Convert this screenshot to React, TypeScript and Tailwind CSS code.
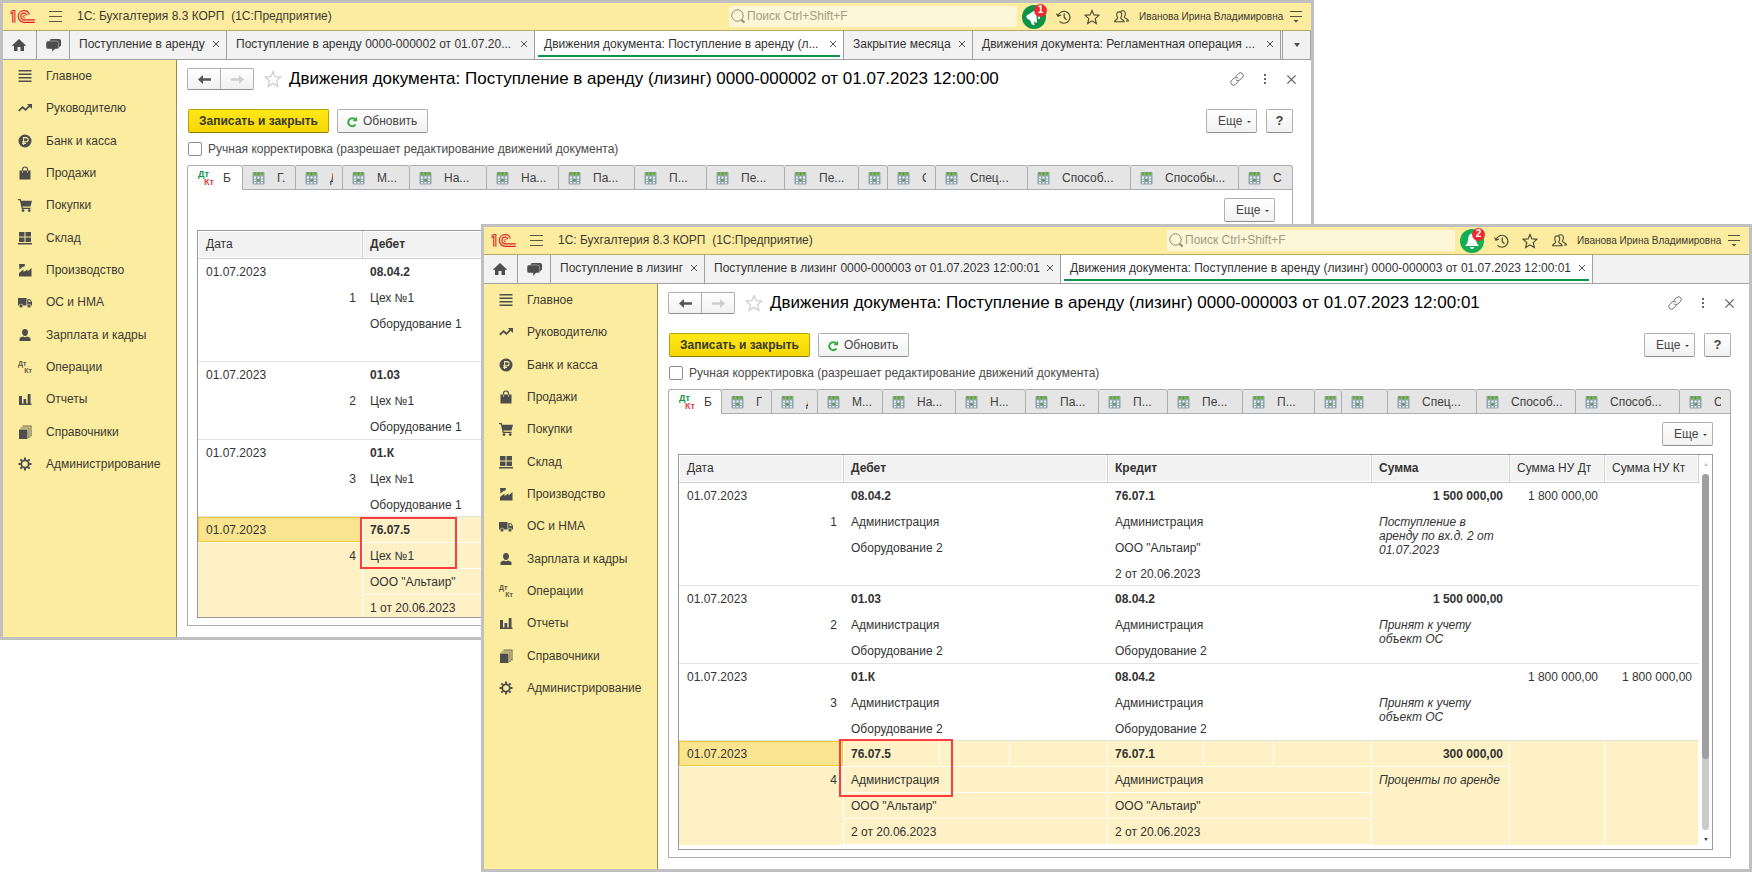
import { useId, type ReactNode } from "react";

type IconProps = { className?: string };

/* ---------- Icons ---------- */

function Logo() {
  return (
    <svg viewBox="0 0 76 40" className="h-[13px] w-[25px] shrink-0" fill="none" stroke="#dc1f26" aria-hidden="true">
      <path d="M1 12 L8 6 M8 6 V39" strokeWidth="3.5" />
      <path d="M1 5 L8 1.500 H14.500 V39" strokeWidth="3.200" />
      <path d="M59 14 C57 5 50 2 43 2 C32 2 25 10 25 19.500 C25 31 34 38 44 38 H76" strokeWidth="3.500" />
      <path d="M51.500 16 C50 11.500 47 9.500 43 9.500 C37 9.500 33 14 33 19.500 C33 26 38 30.500 44 30.500 H76" strokeWidth="3.500" />
      <path d="M46 18 C44 16 40 17 40 20 C40 23 43 24.500 46 24" strokeWidth="3" />
    </svg>
  );
}

function Hamburger() {
  return (
    <svg viewBox="0 0 13 11" className="h-[11px] w-[13px]" stroke="#5f5a3e" aria-hidden="true">
      <path d="M0 .5H13M0 5.500H13M0 10.500H13" />
    </svg>
  );
}

function HomeIcon() {
  return (
    <svg viewBox="0 0 14 12" className="h-3 w-3.5" fill="#4d4d4d" aria-hidden="true">
      <path d="M7 0 0 6.500 1 7.300 2 6.500V12H5.500V8H8.500V12H12V6.500L13 7.300 14 6.500Z" />
    </svg>
  );
}

function ChatIcon() {
  return (
    <svg viewBox="0 0 15 13" className="h-[13px] w-[15px]" aria-hidden="true">
      <rect x="3.500" y="0" width="11.500" height="7.500" rx="2" fill="#4d4d4d" />
      <path d="M10 6H15L12 10Z" fill="#4d4d4d" />
      <path d="M2 2H10.500Q12.500 2 12.500 4V8Q12.500 10 10.500 10H9L6 13V10H2Q0 10 0 8V4Q0 2 2 2Z" fill="#4d4d4d" stroke="#d8d8d8" strokeWidth=".5" />
    </svg>
  );
}

function CloseIcon({ className }: IconProps) {
  return (
    <svg viewBox="0 0 8 8" className={className} stroke="currentColor" fill="none" aria-hidden="true">
      <path d="M1 1 7 7M7 1 1 7" />
    </svg>
  );
}

function SearchIcon() {
  return (
    <svg viewBox="0 0 15 15" className="h-[15px] w-[15px] shrink-0" fill="none" stroke="#8d8767" aria-hidden="true">
      <circle cx="6.500" cy="6.500" r="5.700" />
      <path d="M10.500 11 13.500 13.500" strokeWidth="2" />
    </svg>
  );
}

function HistoryIcon() {
  return (
    <svg viewBox="0 0 15 14" className="h-3.5 w-[15px]" fill="none" stroke="#4a4733" strokeWidth="1.200" aria-hidden="true">
      <path d="M2.200 5.500A6 6 0 1 1 3.500 11.300M.5 3.500 2 6.300 5 5M8.200 3.500V7.500L10.500 9.700" />
    </svg>
  );
}

function StarIcon({ className }: IconProps) {
  return (
    <svg viewBox="0 0 17 17" className={className} fill="none" stroke="currentColor" strokeWidth="1.200" aria-hidden="true">
      <path d="M8.500 1.500 10.600 6.300 15.800 6.700 11.900 10.200 13.100 15.400 8.500 12.600 3.900 15.400 5.100 10.200 1.200 6.700 6.400 6.300Z" />
    </svg>
  );
}

function UsersIcon() {
  return (
    <svg viewBox="0 0 15 13" className="h-[13px] w-[15px]" fill="none" stroke="#4a4733" strokeWidth="1.100" aria-hidden="true">
      <path d="M.6 11.800C.6 9.300 3.700 9.600 3.700 7.900 2.700 6.700 2.600 5.200 2.800 3.700 3.200 1.300 7.300 1.300 7.700 3.700 7.900 5.200 7.700 6.700 6.700 7.900 6.700 9.600 10.200 9.300 10.200 11.800Z" />
      <path d="M6.500 1.700C8 0 11 .6 11.300 3 11.500 4.500 11.200 6 10.300 7 10.300 8.700 14.400 8.500 14.400 11H12" />
    </svg>
  );
}

function ServiceMenuIcon() {
  return (
    <svg viewBox="0 0 12 12" className="h-3 w-3" stroke="#55513a" fill="#55513a" aria-hidden="true">
      <path d="M0 .5H12M0 5.500H12" />
      <path d="M3.500 9H8.500L6 11.500Z" stroke="none" />
    </svg>
  );
}

function MegaphoneIcon() {
  return (
    <svg viewBox="0 0 24 24" className="h-6 w-6" aria-hidden="true">
      <circle cx="12" cy="12" r="12" fill="#0d9347" />
      <path d="M4.200 11 14 4.500 15 18 11.800 16.500 12.800 20 9.800 19.500 8.300 15.500 5 13.500Z" fill="#fff" />
      <path d="M16 9.500Q18.500 10.500 18 13.500L16.300 14.500Z" fill="#fff" />
    </svg>
  );
}

function BellIcon() {
  return (
    <svg viewBox="0 0 24 24" className="h-6 w-6" aria-hidden="true">
      <circle cx="12" cy="12" r="12" fill="#12ad54" />
      <path d="M12 4.500C9 5 8.200 8 8 11 7.700 14 6.500 15.500 5 17H19C17.500 15.500 16.300 14 16 11 15.800 8 15 5 12 4.500ZM9.800 18H14.200Q13.800 20 12 20 10.200 20 9.800 18Z" fill="#fff" />
    </svg>
  );
}

function ArrowIcon({ className }: IconProps) {
  return (
    <svg viewBox="0 0 13 9" className={className} fill="currentColor" aria-hidden="true">
      <path d="M0 4.500 5 0V3.200H13V5.800H5V9Z" />
    </svg>
  );
}

function LinkIcon() {
  return (
    <svg viewBox="0 0 14 14" className="h-3.5 w-3.5" fill="none" stroke="#6b6b6b" strokeLinecap="round" aria-hidden="true">
      <path d="M6 4.200 8.800 1.400A2.700 2.700 0 0 1 12.600 5.200L9.800 8A2.700 2.700 0 0 1 6 8M8 9.800 5.200 12.600A2.700 2.700 0 0 1 1.400 8.800L4.200 6A2.700 2.700 0 0 1 8 6" />
    </svg>
  );
}

function DotsIcon() {
  return (
    <svg viewBox="0 0 4 12" className="h-3 w-1" fill="#666" aria-hidden="true">
      <path d="M1 1H3V3H1ZM1 5H3V7H1ZM1 9H3V11H1Z" />
    </svg>
  );
}

function RefreshIcon() {
  return (
    <svg viewBox="0 0 12 12" className="mt-px h-3 w-3" fill="none" aria-hidden="true">
      <path d="M9 3.300A4 4 0 1 0 9.500 8.500" stroke="#39a845" strokeWidth="2" />
      <path d="M11 .8V5.300H6.500Z" fill="#39a845" />
    </svg>
  );
}

function RegisterIcon() {
  return (
    <svg viewBox="0 0 13 14" className="h-3.5 w-[13px] shrink-0" aria-hidden="true">
      <rect x=".5" y="1" width="12" height="12.500" rx="1" fill="#8fa3b0" />
      <path d="M2 5.500H4V7.500H2ZM5.500 5.500H7.500V7.500H5.500ZM9 5.500H11V7.500H9ZM2 8.500H4V10H2ZM9 8.500H11V10H9ZM2 11H4V12.500H2ZM5.500 11H7.500V12.500H5.500ZM9 11H11V12.500H9Z" fill="#eef3f6" />
      <path d="M5.200 8.200H7.800V10.200H5.200Z" fill="#5fa04a" />
      <path d="M1 1.500H12V4.500H1Z" fill="#86b56c" />
      <path d="M1.500 1.500H4.200L3 4ZM5 1.500H8L6.500 5ZM8.800 1.500H11.500L10 4Z" fill="#559a3d" />
    </svg>
  );
}

function DtKtIcon({ small }: { small?: boolean }) {
  return small ? (
    <span className="block w-3.5 text-left text-[7px] leading-[7px] font-bold text-[#5c5843]" aria-hidden="true">
      <span className="block">Дт</span>
      <span className="block text-right">Кт</span>
    </span>
  ) : (
    <span className="block w-4 shrink-0 text-left text-[9px] leading-[8px] font-bold" aria-hidden="true">
      <span className="block text-[#0c9448]">Дт</span>
      <span className="block text-right text-[#dc3f43]">Кт</span>
    </span>
  );
}

function Glyph({ children }: { children: ReactNode }) {
  return (
    <svg viewBox="0 0 14 14" className="h-3.5 w-3.5" fill="#4d4d4d" aria-hidden="true">
      {children}
    </svg>
  );
}

const sections: { label: string; icon: ReactNode }[] = [
  { label: "Главное", icon: <Glyph><path d="M.5 1H13.500V2.600H.5ZM.5 4.500H13.500V6.100H.5ZM.5 8H13.500V9.600H.5ZM.5 11.500H13.500V13.100H.5Z" /></Glyph> },
  { label: "Руководителю", icon: <Glyph><path d="M.8 9.800 4.500 6.200 7.500 8.800 11.500 4.800" fill="none" stroke="#4d4d4d" strokeWidth="1.800" /><path d="M9 3H14V8Z" /></Glyph> },
  { label: "Банк и касса", icon: <Glyph><circle cx="7" cy="7" r="6.500" /><path d="M5.600 11V3.600H8A2 2 0 0 1 8 7.800H4.200M4.200 9.400H8" fill="none" stroke="#fbec9f" strokeWidth="1.100" /></Glyph> },
  { label: "Продажи", icon: <Glyph><path d="M1.500 4.500H12.500V13.500H1.500Z" /><path d="M4.500 7V3.500A2.500 2.500 0 0 1 9.500 3.500V7" fill="none" stroke="#4d4d4d" strokeWidth="1.200" /><path d="M4.500 4.500V7M9.500 4.500V7" stroke="#b5ab7c" /></Glyph> },
  { label: "Покупки", icon: <Glyph><path d="M0 1H2.600L3.200 2.800H14L12.500 8.500H4.500L4.800 9.700H12.500V11H3.800L1.800 2.300H0Z" /><circle cx="5" cy="12.600" r="1.400" /><circle cx="11.200" cy="12.600" r="1.400" /></Glyph> },
  { label: "Склад", icon: <Glyph><path d="M1 1H6.500V5.500H1ZM7.500 1H13V5.500H7.500ZM1 6.500H6.500V11H1ZM7.500 6.500H13V11H7.500ZM0 12H14V13.500H0Z" /></Glyph> },
  { label: "Производство", icon: <Glyph><path d="M1 13.500V10L5.500 6.500V9L9.500 6.500V8.500L13.500 5V13.500Z" /><path d="M1 1H7L6.500 3.500 4.500 4 1.500 6.500Z" /></Glyph> },
  { label: "ОС и НМА", icon: <Glyph><path d="M0 3H8.500V10.500H0ZM9.200 4.200H12.300L14 7V10.500H9.200Z" /><circle cx="3" cy="11" r="1.900" stroke="#fbec9f" strokeWidth=".6" /><circle cx="11" cy="11" r="1.900" stroke="#fbec9f" strokeWidth=".6" /><path d="M10.500 5.300H12L12.800 7H10.500Z" fill="#fbec9f" /></Glyph> },
  { label: "Зарплата и кадры", icon: <Glyph><path d="M7 1C9 1 10 2.300 10 4.200 10 6 9 8 7 8 5 8 4 6 4 4.200 4 2.300 5 1 7 1ZM1.500 13V10.500Q1.500 9.500 3 9.200L5 8.500Q7 10 9 8.500L11 9.200Q12.500 9.500 12.500 10.500V13Z" /></Glyph> },
  { label: "Операции", icon: <DtKtIcon small /> },
  { label: "Отчеты", icon: <Glyph><path d="M1 4H4V11.500H1ZM5.500 7H8.200V11.500H5.500ZM9.700 2H12.500V11.500H9.700ZM1 11.500H13.500V13H1Z" /></Glyph> },
  { label: "Справочники", icon: <Glyph><path d="M1 4.500H9.500V14H1Z" /><path d="M3 3.500V3H11V12.500H10.200M5 1.700V1.200H13V11H12" fill="none" stroke="#7d7756" strokeWidth="1.200" /></Glyph> },
  { label: "Администрирование", icon: <Glyph><circle cx="7" cy="7" r="3.700" fill="none" stroke="#4d4d4d" strokeWidth="1.800" /><path d="M7 .5V3M7 11V13.500M.5 7H3M11 7H13.500M2.400 2.400 4 4M10 10 11.600 11.600M11.600 2.400 10 4M4 10 2.400 11.600" stroke="#4d4d4d" strokeWidth="2" /></Glyph> },
];

/* ---------- Data ---------- */

type WindowTab = { label: string; width: string; active?: boolean };
type RegisterTab = { label: string; width: string };
type Entry = {
  debit: string[];
  credit: string[];
  sum?: string;
  comment?: string;
  nuDt?: string;
  nuKt?: string;
  height: string;
};

const firstTabs: WindowTab[] = [
  { label: "Поступление в аренду", width: "w-[157px]" },
  { label: "Поступление в аренду 0000-000002 от 01.07.20...", width: "w-[308px]" },
  { label: "Движения документа: Поступление в аренду (л...", width: "w-[309px]", active: true },
  { label: "Закрытие месяца", width: "w-[129px]" },
  { label: "Движения документа: Регламентная операция ...", width: "w-[308px]" },
];

const secondTabs: WindowTab[] = [
  { label: "Поступление в лизинг", width: "w-[154px]" },
  { label: "Поступление в лизинг 0000-000003 от 01.07.2023 12:00:01", width: "w-[356px]" },
  { label: "Движения документа: Поступление в аренду (лизинг) 0000-000003 от 01.07.2023 12:00:01", width: "w-[532px]", active: true },
];

const firstRegisters: RegisterTab[] = [
  { label: "Б", width: "w-[56px]" },
  { label: "Г.", width: "w-[53px]" },
  { label: "Д", width: "w-[47px]" },
  { label: "М...", width: "w-[67px]" },
  { label: "На...", width: "w-[77px]" },
  { label: "На...", width: "w-[72px]" },
  { label: "Па...", width: "w-[76px]" },
  { label: "П...", width: "w-[72px]" },
  { label: "Пе...", width: "w-[78px]" },
  { label: "Пе...", width: "w-[74px]" },
  { label: "", width: "w-[29px]" },
  { label: "С", width: "w-[48px]" },
  { label: "Спец...", width: "w-[92px]" },
  { label: "Способ...", width: "w-[103px]" },
  { label: "Способы...", width: "w-[108px]" },
  { label: "С", width: "flex-1" },
];

const secondRegisters: RegisterTab[] = [
  { label: "Б", width: "w-[54px]" },
  { label: "Г", width: "w-[50px]" },
  { label: "Д", width: "w-[46px]" },
  { label: "М...", width: "w-[65px]" },
  { label: "На...", width: "w-[73px]" },
  { label: "Н...", width: "w-[70px]" },
  { label: "Па...", width: "w-[73px]" },
  { label: "П...", width: "w-[69px]" },
  { label: "Пе...", width: "w-[75px]" },
  { label: "П...", width: "w-[72px]" },
  { label: "", width: "w-[27px]" },
  { label: "", width: "w-[46px]" },
  { label: "Спец...", width: "w-[89px]" },
  { label: "Способ...", width: "w-[99px]" },
  { label: "Способ...", width: "w-[104px]" },
  { label: "С", width: "flex-1" },
];

const rowHeights = ["h-[103px]", "h-[78px]", "h-[77px]", "h-[104px]"];

const firstEntries: Entry[] = [
  { debit: ["08.04.2", "Цех №1", "Оборудование 1"], credit: [], height: rowHeights[0] },
  { debit: ["01.03", "Цех №1", "Оборудование 1"], credit: [], height: rowHeights[1] },
  { debit: ["01.К", "Цех №1", "Оборудование 1"], credit: [], height: rowHeights[2] },
  { debit: ["76.07.5", "Цех №1", 'ООО "Альтаир"', "1 от 20.06.2023"], credit: ["", "", "", ""], height: rowHeights[3] },
];

const secondEntries: Entry[] = [
  {
    debit: ["08.04.2", "Администрация", "Оборудование 2"],
    credit: ["76.07.1", "Администрация", 'ООО "Альтаир"', "2 от 20.06.2023"],
    sum: "1 500 000,00",
    comment: "Поступление в аренду по вх.д. 2 от 01.07.2023",
    nuDt: "1 800 000,00",
    height: rowHeights[0],
  },
  {
    debit: ["01.03", "Администрация", "Оборудование 2"],
    credit: ["08.04.2", "Администрация", "Оборудование 2"],
    sum: "1 500 000,00",
    comment: "Принят к учету объект ОС",
    height: rowHeights[1],
  },
  {
    debit: ["01.К", "Администрация", "Оборудование 2"],
    credit: ["08.04.2", "Администрация", "Оборудование 2"],
    comment: "Принят к учету объект ОС",
    nuDt: "1 800 000,00",
    nuKt: "1 800 000,00",
    height: rowHeights[2],
  },
  {
    debit: ["76.07.5", "Администрация", 'ООО "Альтаир"', "2 от 20.06.2023"],
    credit: ["76.07.1", "Администрация", 'ООО "Альтаир"', "2 от 20.06.2023"],
    sum: "300 000,00",
    comment: "Проценты по аренде",
    height: rowHeights[3],
  },
];

/* ---------- Parts ---------- */

const plainButton =
  "flex h-6 items-center rounded-[2px] border border-[#b0b0b0] border-b-[#8f8f8f] bg-gradient-to-b from-white to-[#f1f1f1] text-[#454545]";

function MoreButton() {
  return (
    <button type="button" className={`${plainButton} w-[51px] gap-[5px] pl-[11px]`}>
      Еще
      <svg viewBox="0 0 4 2" className="mt-0.5 h-0.5 w-1" fill="#454545" aria-hidden="true">
        <path d="M0 0H4L2 2Z" />
      </svg>
    </button>
  );
}

function TopBar({ notification, count }: { notification: ReactNode; count: number }) {
  return (
    <header className="flex h-7 shrink-0 items-center border-b border-[#b5a96b] bg-[#fbec9f] pr-[9px] pl-[7px]">
      <Logo />
      <button type="button" aria-label="Главное меню" className="ml-3.5">
        <Hamburger />
      </button>
      <span className="ml-[15px] flex-1 pb-0.5 whitespace-pre text-[#3b3a32]">1С: Бухгалтерия 8.3 КОРП  (1С:Предприятие)</span>
      <label className="flex h-[21px] w-72 shrink-0 items-center rounded-[2px] bg-[#fdf6d8] pl-0.5">
        <SearchIcon />
        <input
          type="text"
          aria-label="Поиск"
          placeholder="Поиск Ctrl+Shift+F"
          className="min-w-0 flex-1 bg-transparent pb-0.5 pl-px outline-none placeholder:text-[#a19c82]"
        />
      </label>
      <button type="button" aria-label="Уведомления" className="relative ml-[5px] h-6 w-6">
        {notification}
        <span className="absolute -top-px -right-px flex h-[13px] w-[13px] items-center justify-center rounded-full bg-[#ee2a2e] text-[10px] font-bold text-white">
          {count}
        </span>
      </button>
      <button type="button" aria-label="История" className="ml-2.5">
        <HistoryIcon />
      </button>
      <button type="button" aria-label="Избранное" className="ml-[13px] text-[#4a4733]">
        <StarIcon className="h-4 w-4" />
      </button>
      <button type="button" aria-label="Пользователи" className="ml-3.5">
        <UsersIcon />
      </button>
      <span className="ml-2.5 w-[139px] text-[10px] whitespace-nowrap text-[#3b3a32]">Иванова Ирина Владимировна</span>
      <button type="button" aria-label="Сервис и настройки" className="ml-3">
        <ServiceMenuIcon />
      </button>
    </header>
  );
}

function TabBar({ tabs, overflow }: { tabs: WindowTab[]; overflow?: boolean }) {
  return (
    <nav className="flex h-[29px] shrink-0 border-b border-[#a0a0a0] bg-[#f2f2f2]">
      <button type="button" aria-label="Начальная страница" className="flex w-[34px] shrink-0 items-center justify-center border-r border-[#a0a0a0] pr-0.5">
        <HomeIcon />
      </button>
      <button type="button" aria-label="Обсуждения" className="flex w-[33px] shrink-0 items-center justify-center border-r border-[#a0a0a0]">
        <ChatIcon />
      </button>
      {tabs.map((tab) => (
        <div key={tab.label} className={`${tab.width} ${tab.active ? "bg-white" : ""} shrink-0 border-r border-[#a0a0a0] px-[3px]`}>
          <div className={`${tab.active ? "border-[#0c9448]" : "border-transparent"} flex h-[26px] items-center border-b-2 pt-0.5 pl-1.5`}>
            <button type="button" className="min-w-0 flex-1 text-left whitespace-nowrap">
              {tab.label}
            </button>
            <button type="button" aria-label="Закрыть вкладку" className="flex w-3.5 shrink-0 justify-center text-[#4d4d4d]">
              <CloseIcon className="h-2 w-2" />
            </button>
          </div>
        </div>
      ))}
      {overflow && (
        <button type="button" aria-label="Все вкладки" className="ml-px flex flex-1 items-center justify-center border-x border-[#a0a0a0]">
          <svg viewBox="0 0 6 4" className="h-1 w-1.5" fill="#4d4d4d" aria-hidden="true">
            <path d="M0 0H6L3 4Z" />
          </svg>
        </button>
      )}
    </nav>
  );
}

function Sidebar() {
  return (
    <nav className="w-[174px] shrink-0 border-r border-[#968c55] bg-[#fbec9f]">
      <ul className="grid h-[420px] auto-rows-fr">
        {sections.map((section) => (
          <li key={section.label}>
            <a href="#" className="flex h-full items-center gap-3.5 pl-[15px] text-[#3b3a32]">
              <span className="w-3.5">{section.icon}</span>
              {section.label}
            </a>
          </li>
        ))}
      </ul>
    </nav>
  );
}

function Lines({ lines, selected }: { lines: string[]; selected?: boolean }) {
  return (
    <>
      {lines.map((line, index) => (
        <div
          key={index}
          className={`${index === 0 ? "font-bold" : ""} ${selected ? "border-b border-white bg-[#fdf1c5]" : ""} flex h-[26px]`}
        >
          {selected && index === 0 ? (
            <>
              <span className="w-24 border-r border-white pl-[7px] leading-[27px]">{line}</span>
              <span className="w-[70px] border-r border-white" />
            </>
          ) : (
            <span className="pl-[7px] leading-[27px]">{line}</span>
          )}
        </div>
      ))}
    </>
  );
}

function EntriesTable({ entries, highlight }: { entries: Entry[]; highlight: string }) {
  const head = "h-7 border-r border-b border-[#cfcfcf] p-px";
  const headFill = "block h-[25px] bg-[#f2f2f2] pl-1.5 leading-[24px]";
  return (
    <table className="w-full table-fixed border-separate border-spacing-0 text-left text-[#333]">
      <colgroup>
        <col className="w-[165px]" />
        <col />
        <col />
        <col className="w-[138px]" />
        <col className="w-[95px]" />
        <col className="w-[94px]" />
      </colgroup>
      <thead>
        <tr>
          <th className={`${head} font-normal`}><span className="block h-[25px] bg-[#f2f2f2] pl-[7px] leading-[24px]">Дата</span></th>
          <th className={head}><span className={headFill}>Дебет</span></th>
          <th className={head}><span className={headFill}>Кредит</span></th>
          <th className={head}><span className={headFill}>Сумма</span></th>
          <th className={`${head} font-normal`}><span className={headFill}>Сумма НУ Дт</span></th>
          <th className={`${head} font-normal`}><span className={headFill}>Сумма НУ Кт</span></th>
        </tr>
      </thead>
      <tbody className="align-top">
        {entries.map((entry, index) => {
          const selected = index === entries.length - 1;
          const fill = selected ? "border-r border-white bg-[#fdf1c5]" : "";
          return (
            <tr key={index} className="shadow-[inset_0_-1px_0_#e2e2e2]">
              <td className={`${entry.height} p-0`}>
                <div className={`${entry.height} ${fill}`}>
                  <div className={`${selected ? "border-b border-white" : ""} h-[26px]`}>
                    <div className={`${selected ? "border border-[#f7c82c] bg-[#fbe48f] pl-[7px] leading-[25px]" : "pl-2 leading-[27px]"} h-[25px]`}>
                      01.07.2023
                    </div>
                  </div>
                  <div className={`${selected ? "pr-1.5" : "pr-[7px]"} h-[26px] text-right leading-[27px]`}>{index + 1}</div>
                </div>
              </td>
              <td className="p-0">
                <div className={`${entry.height} ${selected ? "border-r border-white" : ""} relative`}>
                  <Lines lines={entry.debit} selected={selected} />
                  {selected && <div className={`${highlight} pointer-events-none absolute border-2 border-[#f93e42]`} />}
                </div>
              </td>
              <td className="p-0">
                <div className={`${entry.height} ${selected ? "border-r border-white" : ""}`}>
                  <Lines lines={entry.credit} selected={selected} />
                </div>
              </td>
              <td className="p-0">
                <div className={`${entry.height} ${fill}`}>
                  <div className={`${selected ? "border-b border-white pr-1.5" : "pr-[7px]"} h-[26px] text-right leading-[27px] font-bold`}>{entry.sum}</div>
                  <div className="w-[128px] pt-1.5 pl-[7px] leading-[14px] italic">{entry.comment}</div>
                </div>
              </td>
              <td className="p-0">
                <div className={`${entry.height} ${fill} pr-[7px] text-right leading-[27px]`}>{entry.nuDt}</div>
              </td>
              <td className="p-0">
                <div className={`${entry.height} ${fill} pr-[7px] text-right leading-[27px]`}>{entry.nuKt}</div>
              </td>
            </tr>
          );
        })}
      </tbody>
    </table>
  );
}

function ScrollBar() {
  return (
    <div className="flex w-[13px] shrink-0 flex-col items-center bg-white" aria-hidden="true">
      <div className="flex h-[19px] items-center">
        <svg viewBox="0 0 4 3" className="h-[3px] w-1" fill="#c4c4c4"><path d="M2 0 4 3H0Z" /></svg>
      </div>
      <div className="w-[7px] flex-1 rounded-full bg-[#cbcbcb]">
        <div className="h-4/5 rounded-full bg-[#9f9f9f]" />
      </div>
      <div className="flex h-[19px] items-center">
        <svg viewBox="0 0 4 3" className="h-[3px] w-1" fill="#444"><path d="M0 0H4L2 3Z" /></svg>
      </div>
    </div>
  );
}

type AppWindowProps = {
  className: string;
  tabs: WindowTab[];
  overflow?: boolean;
  registers: RegisterTab[];
  title: string;
  entries: Entry[];
  highlight: string;
  notification: ReactNode;
  count: number;
};

function AppWindow({ className, tabs, overflow, registers, title, entries, highlight, notification, count }: AppWindowProps) {
  const manualId = useId();
  return (
    <section className={`${className} absolute flex flex-col overflow-hidden border-[3px] border-[#c0c0c0] bg-white`}>
      <TopBar notification={notification} count={count} />
      <TabBar tabs={tabs} overflow={overflow} />
      <div className="flex min-h-0 flex-1">
        <Sidebar />
        <main className="flex min-w-0 flex-1 flex-col pt-2 pb-[11px] pl-2.5">
          <div className="flex h-[22px] shrink-0 items-center pr-3.5">
            <div className="flex h-[22px] w-[67px] rounded-[2px] border border-[#b0b0b0] border-b-[#8f8f8f] bg-gradient-to-b from-white to-[#f1f1f1]">
              <button type="button" aria-label="Назад" className="flex flex-1 items-center justify-center border-r border-[#b0b0b0] text-[#555]">
                <ArrowIcon className="h-[9px] w-[13px]" />
              </button>
              <button type="button" aria-label="Вперед" className="flex flex-1 items-center justify-center text-[#cfcfcf]">
                <ArrowIcon className="h-[9px] w-[13px] rotate-180" />
              </button>
            </div>
            <button type="button" aria-label="В избранное" className="ml-2.5 text-[#cfcfcf]">
              <StarIcon className="h-[18px] w-[18px]" />
            </button>
            <h1 className="ml-[7px] flex-1 text-[17px] leading-[22px] whitespace-nowrap text-black">{title}</h1>
            <div className="flex items-center gap-[19px]">
              <button type="button" aria-label="Получить ссылку"><LinkIcon /></button>
              <button type="button" aria-label="Дополнительно"><DotsIcon /></button>
              <button type="button" aria-label="Закрыть" className="text-[#666]"><CloseIcon className="h-[11px] w-[11px]" /></button>
            </div>
          </div>

          <div className="mt-[19px] flex shrink-0 items-center pr-[18px] pl-px">
            <button
              type="button"
              className="h-6 w-[141px] rounded-[2px] border border-[#b8a200] border-b-[#8c7b00] bg-gradient-to-b from-[#ffe818] to-[#f6d700] font-bold text-[#3a3a2a]"
            >
              Записать и закрыть
            </button>
            <button type="button" className={`${plainButton} ml-2 w-[91px] gap-[5px] pl-2`}>
              <RefreshIcon />
              Обновить
            </button>
            <div className="ml-auto flex gap-[9px]">
              <MoreButton />
              <button type="button" aria-label="Справка" className={`${plainButton} w-[27px] justify-center text-[13px] font-bold`}>?</button>
            </div>
          </div>

          <div className="mt-[9px] flex h-3.5 shrink-0 items-center gap-1.5 pl-px">
            <input id={manualId} type="checkbox" className="h-3.5 w-3.5 appearance-none rounded-[2px] border border-[#8f8f8f] bg-white checked:bg-[#0c9448]" />
            <label htmlFor={manualId} className="text-[#4a4a4a]">Ручная корректировка (разрешает редактирование движений документа)</label>
          </div>

          <div className="mt-[9px] mr-[18px] flex min-h-0 flex-1 flex-col">
            <div role="tablist" className="flex h-[25px] shrink-0">
              {registers.map((register, index) => (
                <button
                  key={index}
                  type="button"
                  role="tab"
                  aria-selected={index === 0}
                  className={`${register.width} ${index === 0 ? "rounded-tl-[3px] border-x bg-white pl-2.5" : "border-r border-b bg-[#e5e5e5] pl-[9px]"} flex min-w-0 items-center overflow-hidden rounded-tr-[3px] border-t border-[#adadad] pr-[9px] text-[#404040]`}
                >
                  {index === 0 ? <DtKtIcon /> : <RegisterIcon />}
                  <span className={`${index === 0 ? "ml-[9px]" : "ml-3"} min-w-0 flex-1 overflow-hidden text-left whitespace-nowrap`}>{register.label}</span>
                </button>
              ))}
            </div>
            <div className="flex min-h-0 flex-1 flex-col border-x border-b border-[#adadad] pt-2 pr-[17px] pb-[7px] pl-[9px]">
              <div className="flex shrink-0 justify-end">
                <MoreButton />
              </div>
              <div className="mt-2 flex min-h-0 flex-1 overflow-hidden border border-[#999]">
                <div className="min-w-0 flex-1 overflow-hidden">
                  <EntriesTable entries={entries} highlight={highlight} />
                </div>
                <ScrollBar />
              </div>
            </div>
          </div>
        </main>
      </div>
    </section>
  );
}

export default function App() {
  return (
    <div className="relative h-screen min-h-[872px] overflow-hidden bg-white font-['Liberation_Sans',Arial,sans-serif] text-[12px] leading-[16px] text-[#333]">
      <AppWindow
        className="top-0 left-0 h-[640px] w-3/4"
        tabs={firstTabs}
        overflow
        registers={firstRegisters}
        title="Движения документа: Поступление в аренду (лизинг) 0000-000002 от 01.07.2023 12:00:00"
        entries={firstEntries}
        highlight="-left-[3px] top-0 h-[52px] w-[97px]"
        notification={<MegaphoneIcon />}
        count={1}
      />
      <AppWindow
        className="top-[224px] right-0 bottom-0 left-[481px]"
        tabs={secondTabs}
        registers={secondRegisters}
        title="Движения документа: Поступление в аренду (лизинг) 0000-000003 от 01.07.2023 12:00:01"
        entries={secondEntries}
        highlight="-left-[5px] -top-[2px] h-[58px] w-[114px]"
        notification={<BellIcon />}
        count={2}
      />
    </div>
  );
}
